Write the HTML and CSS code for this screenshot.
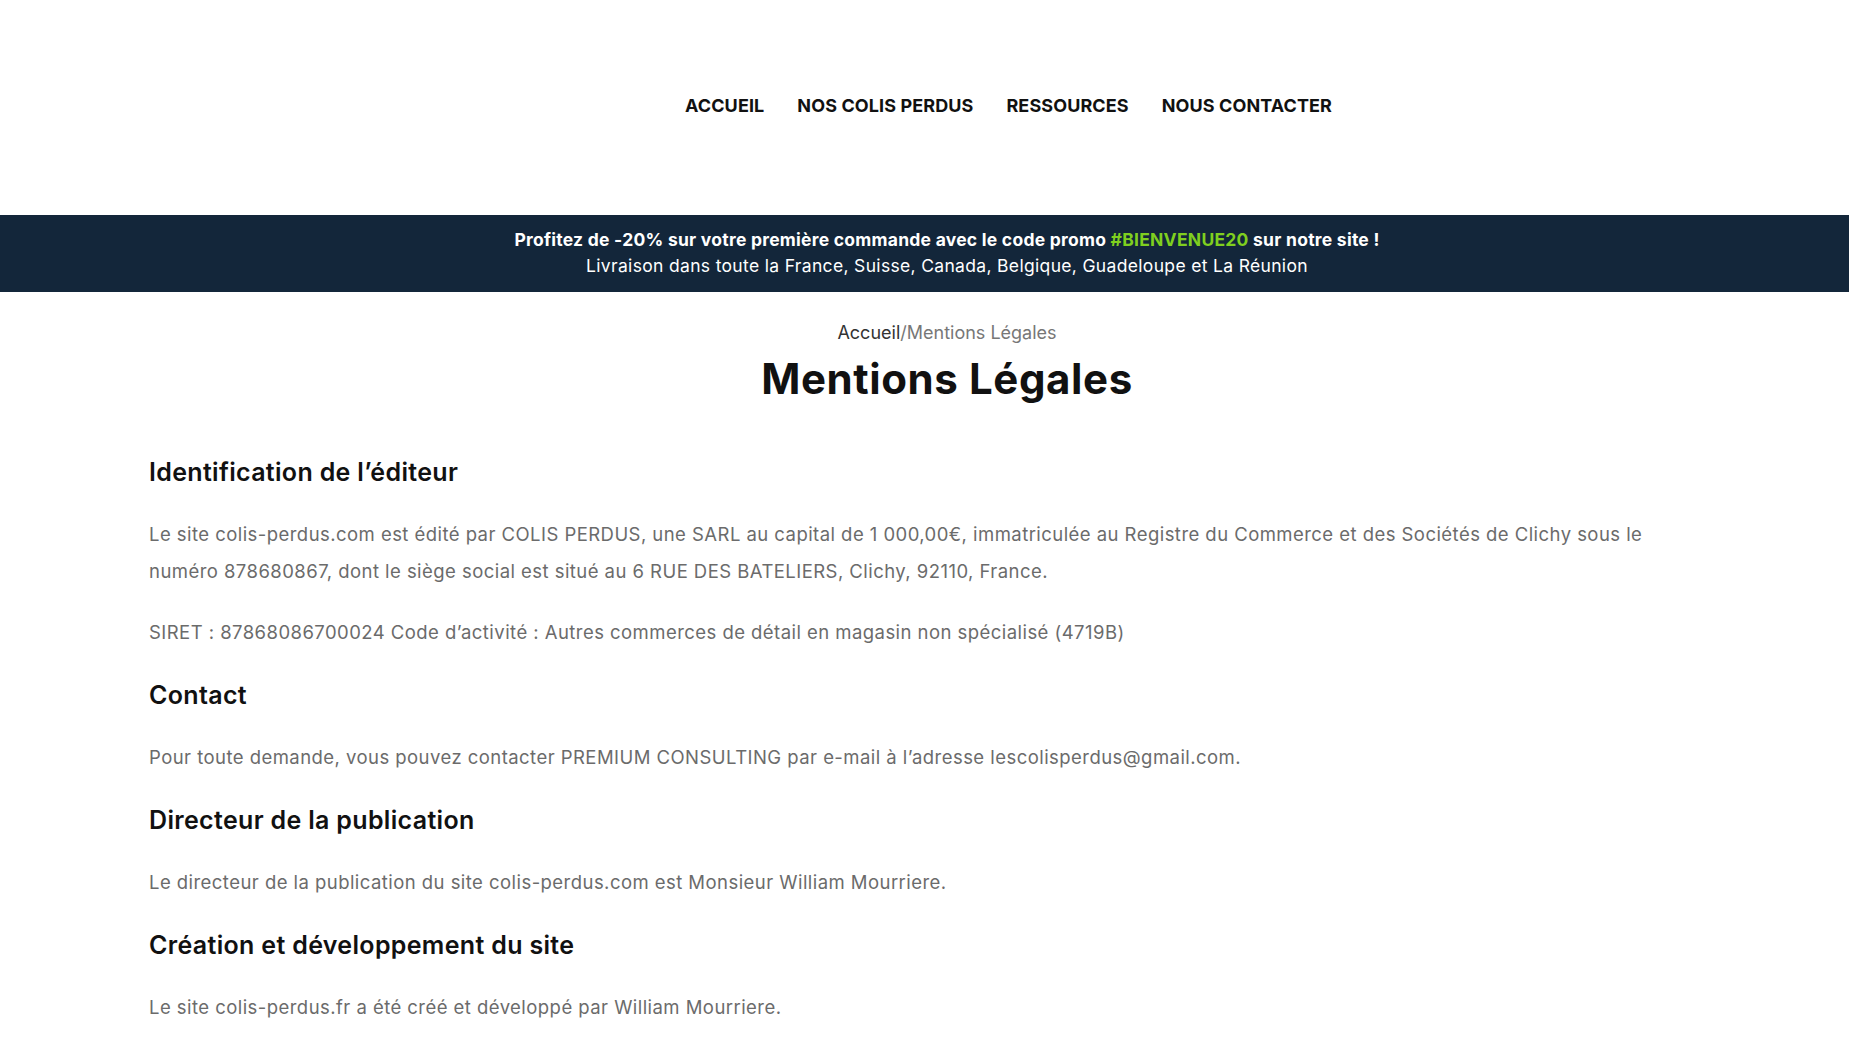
FILE: index.html
```html
<!DOCTYPE html>
<html lang="fr">
<head>
<meta charset="utf-8">
<title>Mentions Légales - Colis Perdus</title>
<link rel="stylesheet" href="styles.css">
</head>
<body>
<header class="site-header">
  <nav class="main-nav">
    <a href="#">ACCUEIL</a>
    <a href="#">NOS COLIS PERDUS</a>
    <a href="#">RESSOURCES</a>
    <a href="#">NOUS CONTACTER</a>
  </nav>
</header>
<div class="promo">
  <p class="promo-line1">Profitez de -20% sur votre première commande avec le code promo <span class="code">#BIENVENUE20</span> sur notre site !</p>
  <p class="promo-line2">Livraison dans toute la France, Suisse, Canada, Belgique, Guadeloupe et La Réunion</p>
</div>
<main class="page">
  <div class="breadcrumb"><a href="#">Accueil</a>/<span>Mentions Légales</span></div>
  <h1 class="title">Mentions Légales</h1>
  <section class="content">
    <h2 class="first">Identification de l’éditeur</h2>
    <p>Le site colis-perdus.com est édité par COLIS PERDUS, une SARL au capital de 1 000,00€, immatriculée au Registre du Commerce et des Sociétés de Clichy sous le numéro 878680867, dont le siège social est situé au 6 RUE DES BATELIERS, Clichy, 92110, France.</p>
    <p>SIRET : 87868086700024 Code d’activité : Autres commerces de détail en magasin non spécialisé (4719B)</p>
    <h2>Contact</h2>
    <p>Pour toute demande, vous pouvez contacter PREMIUM CONSULTING par e-mail à l’adresse lescolisperdus@gmail.com.</p>
    <h2>Directeur de la publication</h2>
    <p>Le directeur de la publication du site colis-perdus.com est Monsieur William Mourriere.</p>
    <h2>Création et développement du site</h2>
    <p>Le site colis-perdus.fr a été créé et développé par William Mourriere.</p>
  </section>
</main>
</body>
</html>
```
FILE: styles.css
```css
* { box-sizing: border-box; }
html, body { margin: 0; padding: 0; background: #fff; }
body { font-family: Inter, "Open Sans", sans-serif; color: #111; overflow: hidden; }
a { color: inherit; text-decoration: none; }

.site-header {
  height: 215px;
  display: flex;
  align-items: center;
  justify-content: center;
  padding-left: 168px;
  padding-bottom: 4px;
}
.main-nav { display: flex; gap: 33px; }
.main-nav a {
  font-size: 18px;
  font-weight: 700;
  color: #111;
  letter-spacing: 0.1px;
}

.promo {
  background: #13263a;
  height: 77px;
  color: #fff;
  text-align: center;
  padding: 13px 0 0 45px;
}
.promo p { margin: 0; }
.promo-line1 { font-size: 17.5px; font-weight: 700; line-height: 24px; letter-spacing: 0.25px; }
.promo-line2 { font-size: 17.5px; font-weight: 400; line-height: 27px; letter-spacing: 0.33px; }
.code { color: #7fcf1f; }

.page { padding: 28px 0 0 0; }
.breadcrumb {
  text-align: center;
  font-size: 18px;
  line-height: 26px;
  color: #777;
  padding-left: 45px;
}
.breadcrumb a { color: #333; }
.title {
  margin: 8px 0 0;
  text-align: center;
  font-size: 42px;
  line-height: 50px;
  font-weight: 700;
  color: #111;
  padding-left: 45px;
  letter-spacing: 0.6px;
}

.content { margin-left: 149px; width: 1520px; }
.content h2 {
  margin: 29px 0 29px;
  font-size: 25px;
  line-height: 30px;
  font-weight: 600;
  color: #111;
  letter-spacing: 0.33px;
}
.content h2.first { margin-top: 53px; }
.content p {
  margin: 0 0 24px;
  font-size: 18.5px;
  line-height: 37px;
  color: #6b6b6b;
  letter-spacing: 0.45px;
}
```
